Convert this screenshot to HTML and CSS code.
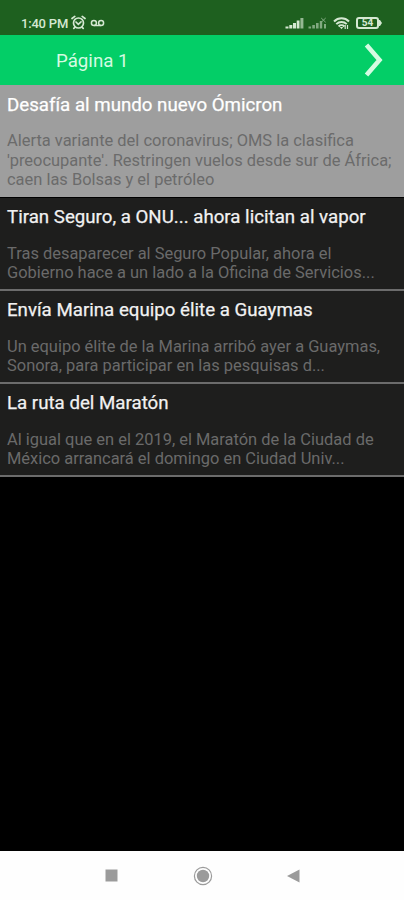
FILE: index.html
```html
<!DOCTYPE html>
<html lang="es">
<head>
<meta charset="utf-8">
<title>Página 1</title>
<link rel="stylesheet" href="styles.css">
</head>
<body>
<div class="status">
  <div class="status-left">
    <span class="clock">1:40 PM</span>
    <svg class="alarm" width="15" height="15" viewBox="0 0 15 15" fill="none" stroke="currentColor" stroke-width="1.7" stroke-linecap="round"><circle cx="7.5" cy="8" r="5"/><path d="M1 3.5 3.8 1.4M14 3.5 11.2 1.4M5 7l2.3 2.3L10 6.8M3.8 12.3l-1 1M11.2 12.3l1 1"/></svg>
    <svg width="15" height="8" viewBox="0 0 15 8" fill="none" stroke="currentColor" stroke-width="1.5"><circle cx="3.9" cy="4" r="2.5"/><circle cx="11.1" cy="4" r="2.5"/><path d="M3.9 6.5h7.2"/></svg>
  </div>
  <div class="status-right">
    <svg width="19" height="12" viewBox="0 0 19 12" fill="currentColor"><path d="M.5 9.500h3V11.500h-3zM4.300 8h3v3.500h-3zM8 6h3v5.500H8zM11.700 3.500h2.800v8h-2.800z"/><path d="M15.400 1h3v10.500h-3z" opacity=".65"/></svg>
    <svg class="signal-off" width="19" height="12" viewBox="0 0 19 12" fill="currentColor"><path d="M.5 9.500h2.600v2H.5zM4.300 8h2.600v3.500H4.300zM8 6h2.600v5.500H8zM11.800 4h2.400v7.500h-2.400zM16 7h2v4.500h-2z"/><path d="m13.200 1 4.500 4.300M17.700 1l-4.500 4.300" stroke="currentColor"/></svg>
    <svg class="wifi" width="17" height="13" viewBox="0 0 17 13" fill="none" stroke="currentColor" stroke-width="2"><path d="M1 4.500C5.200.3 11.800.3 16 4.500M3.300 7.100c2.900-2.900 7.500-2.900 10.400 0M5.600 9.500c1.600-1.600 4.200-1.600 5.800 0"/><path d="m6.800 10 1.700 2.300 1.700-2.300z" fill="currentColor" stroke="none"/><path d="M12.200 8v4M14.500 8v4" stroke-width="1.200"/></svg>
    <span class="battery"><span class="level">54</span><svg width="3" height="6" viewBox="0 0 3 6" fill="currentColor"><path d="M0 0h1l2 3-2 3H0z"/></svg></span>
  </div>
</div>
<header class="bar">
  <h1>Página 1</h1>
  <svg class="next" width="20" height="34" viewBox="0 0 20 34" fill="none" stroke="currentColor" stroke-width="4.600"><path d="M2.500 2 15.500 17 2.500 32"/></svg>
</header>
<main>
  <article class="item selected">
    <h2>Desafía al mundo nuevo Ómicron</h2>
    <p>Alerta variante del coronavirus; OMS la clasifica<br>'preocupante'. Restringen vuelos desde sur de África;<br>caen las Bolsas y el petróleo</p>
  </article>
  <article class="item">
    <h2>Tiran Seguro, a ONU... ahora licitan al vapor</h2>
    <p>Tras desaparecer al Seguro Popular, ahora el<br>Gobierno hace a un lado a la Oficina de Servicios...</p>
  </article>
  <article class="item">
    <h2>Envía Marina equipo élite a Guaymas</h2>
    <p>Un equipo élite de la Marina arribó ayer a Guaymas,<br>Sonora, para participar en las pesquisas d...</p>
  </article>
  <article class="item">
    <h2>La ruta del Maratón</h2>
    <p>Al igual que en el 2019, el Maratón de la Ciudad de<br>México arrancará el domingo en Ciudad Univ...</p>
  </article>
</main>
<nav class="nav">
  <svg width="13" height="13" viewBox="0 0 13 13" fill="currentColor"><rect x=".5" y=".5" width="12" height="12"/></svg>
  <svg width="20" height="20" viewBox="0 0 20 20" fill="currentColor"><circle cx="10" cy="10" r="6.200"/><circle cx="10" cy="10" r="8.600" fill="none" stroke="currentColor" stroke-width="1.200"/></svg>
  <svg width="13" height="14" viewBox="0 0 13 14" fill="currentColor"><path d="M0 7 12.500.500v13z"/></svg>
</nav>
</body>
</html>
```
FILE: styles.css
```css
* { box-sizing: border-box; margin: 0; padding: 0; }
body {
  width: 404px;
  height: 900px;
  display: flex;
  flex-direction: column;
  background: #000;
  font-family: Roboto, sans-serif;
  overflow: hidden;
}
svg { display: block; flex: none; }
.status {
  height: 35px;
  flex: none;
  padding: 10px 22px 0 21px;
  display: flex;
  justify-content: space-between;
  background: #1e601f;
  color: #d5e8d2;
}
.status-left, .status-right { display: flex; align-items: center; height: 26px; }
.clock { font-size: 13px; font-weight: 500; letter-spacing: -0.2px; white-space: nowrap; width: 49px; }
.alarm { margin: -1px 4px 0 1px; }
.status-right { gap: 4px; }
.signal-off { opacity: .55; }
.wifi { margin-left: 2px; }
.battery { display: flex; align-items: center; margin-left: 2px; }
.level {
  width: 23px;
  height: 12px;
  border: 2px solid currentColor;
  border-radius: 3px;
  font-size: 10px;
  font-weight: 700;
  line-height: 8px;
  text-align: center;
}
.bar {
  height: 50px;
  flex: none;
  display: flex;
  align-items: center;
  justify-content: space-between;
  padding: 0 20px 0 56px;
  background: #03ce67;
  color: #d5fbe2;
}
.bar h1 { padding-top: 2px; font-size: 18.7px; font-weight: 400; line-height: 24px; }
.item {
  height: 93px;
  padding: 7px 7px 0;
  background: #1e1e1d;
  border-bottom: 2px solid #6c6c6c;
  color: #f1f1f1;
}
.item h2 {
  font-size: 18.7px;
  font-weight: 400;
  line-height: 24px;
  white-space: nowrap;
  -webkit-text-stroke: 0.25px currentColor;
}
.item p { margin-top: 15px; font-size: 16.45px; line-height: 19px; color: #6a6a6a; white-space: nowrap; }
.item.selected { height: 113px; padding-top: 8px; background: #9e9e9e; border-bottom: 1px solid #000; color: #fff; }
.selected p { margin-top: 14px; line-height: 19.5px; color: #6b6b6b; }
.nav {
  height: 49px;
  flex: none;
  margin-top: auto;
  padding: 0 104px 0 105px;
  display: flex;
  align-items: center;
  justify-content: space-between;
  background: #fefefe;
  color: #9b9b9b;
}
```
